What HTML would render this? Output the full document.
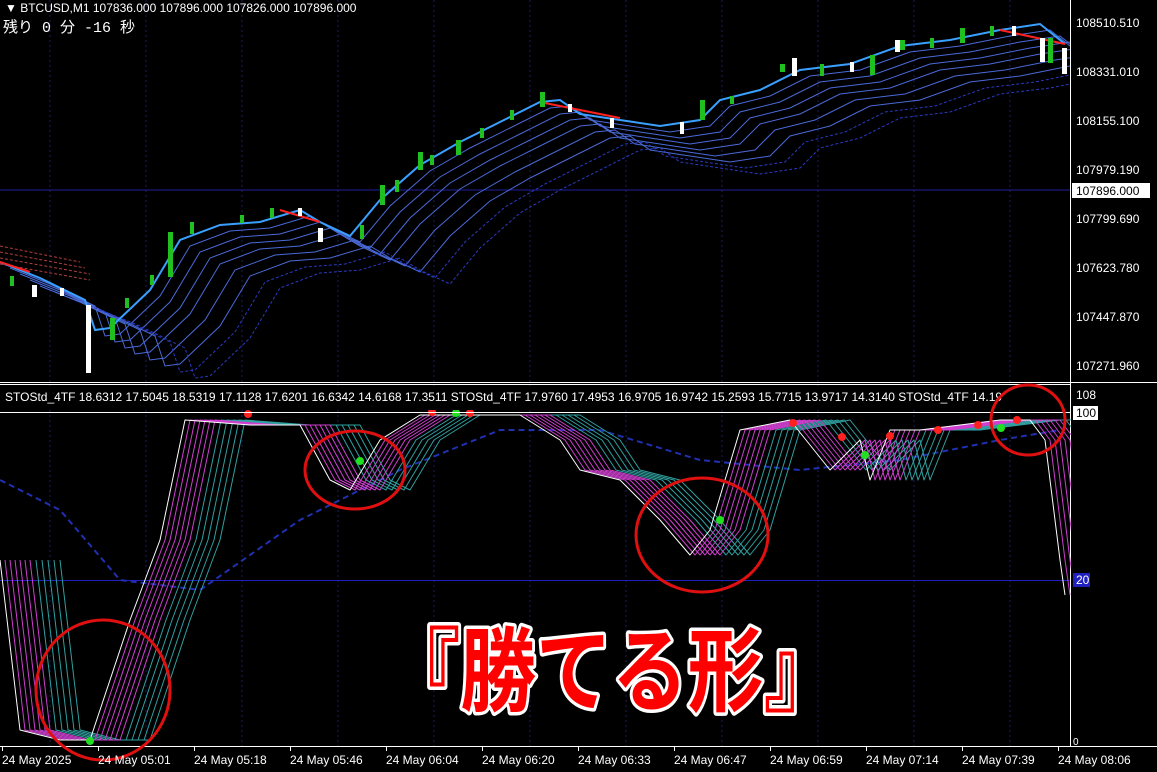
<!DOCTYPE html><html><head><meta charset="utf-8"><style>
html,body{margin:0;padding:0;background:#000;width:1157px;height:772px;overflow:hidden}
svg{display:block}
</style></head><body>
<svg width="1157" height="772" viewBox="0 0 1157 772" xmlns="http://www.w3.org/2000/svg" font-family="Liberation Sans, sans-serif">
<defs>
<path id="pr" fill="none" d="M0,262 L40,278 L85,300 L95,330 L110,328 L150,290 L180,240 L220,225 L260,222 L300,210 L320,222 L350,236 L380,200 L420,165 L460,142 L500,122 L540,102 L560,100 L580,114 L620,120 L660,126 L700,120 L720,100 L760,90 L800,70 L850,64 L900,46 L950,40 L1000,30 L1040,24 L1065,44"/>
<path id="st" fill="none" stroke-linejoin="round" d="M0,560 L20,730 L60,740 L90,740 L130,620 L160,540 L185,420 L250,425 L300,425 L330,480 L350,490 L380,440 L420,415 L520,415 L560,440 L580,470 L620,480 L660,520 L690,555 L710,530 L740,430 L790,420 L830,470 L860,440 L870,480 L890,430 L920,430 L1000,420 L1030,420 L1045,440 L1060,560 L1065,595"/>
</defs>
<g stroke="#1c1c60" stroke-dasharray="2,3">
<line x1="50" y1="0" x2="50" y2="746"/><line x1="146" y1="0" x2="146" y2="746"/><line x1="242" y1="0" x2="242" y2="746"/><line x1="338" y1="0" x2="338" y2="746"/><line x1="434" y1="0" x2="434" y2="746"/><line x1="530" y1="0" x2="530" y2="746"/><line x1="626" y1="0" x2="626" y2="746"/><line x1="722" y1="0" x2="722" y2="746"/><line x1="818" y1="0" x2="818" y2="746"/><line x1="914" y1="0" x2="914" y2="746"/><line x1="1010" y1="0" x2="1010" y2="746"/>
</g>
<line x1="0" y1="190" x2="1070" y2="190" stroke="#2020a0"/>
<g stroke="#4a6ad8" stroke-width="1">
<use href="#pr" transform="translate(10,6)"/><use href="#pr" transform="translate(20,12)"/><use href="#pr" transform="translate(30,18)"/><use href="#pr" transform="translate(40,24)"/><use href="#pr" transform="translate(55,30)"/><use href="#pr" transform="translate(70,36)"/>
</g>
<g stroke="#2a3ac0" stroke-dasharray="3,2"><use href="#pr" transform="translate(85,42)"/><use href="#pr" transform="translate(100,48)"/></g>
<g stroke="#b04040" stroke-dasharray="3,2"><line x1="0" y1="246" x2="80" y2="262"/><line x1="0" y1="252" x2="85" y2="268"/><line x1="0" y1="258" x2="90" y2="274"/><line x1="0" y1="264" x2="90" y2="280"/></g>
<use href="#pr" stroke="#3aa0ff" stroke-width="2"/>
<path d="M540,102 L620,118 M280,210 L320,222 M1000,30 L1065,44 M0,262 L30,272" stroke="#ff2020" stroke-width="2" fill="none"/>
<g fill="#20c020"><rect x="110" y="318" width="5" height="22"/><rect x="168" y="232" width="5" height="45"/><rect x="380" y="185" width="5" height="20"/><rect x="418" y="152" width="5" height="18"/><rect x="456" y="140" width="5" height="15"/><rect x="540" y="92" width="5" height="15"/><rect x="700" y="100" width="5" height="20"/><rect x="870" y="55" width="5" height="20"/><rect x="960" y="28" width="5" height="15"/><rect x="1048" y="38" width="5" height="25"/><rect x="780" y="64" width="5" height="8"/><rect x="900" y="40" width="5" height="10"/><rect x="125" y="298" width="4" height="10"/><rect x="150" y="275" width="4" height="10"/><rect x="190" y="222" width="4" height="12"/><rect x="240" y="215" width="4" height="8"/><rect x="270" y="208" width="4" height="10"/><rect x="360" y="225" width="4" height="14"/><rect x="395" y="180" width="4" height="12"/><rect x="430" y="155" width="4" height="10"/><rect x="480" y="128" width="4" height="10"/><rect x="510" y="110" width="4" height="10"/><rect x="730" y="96" width="4" height="8"/><rect x="820" y="64" width="4" height="12"/><rect x="930" y="38" width="4" height="10"/><rect x="990" y="26" width="4" height="10"/><rect x="10" y="276" width="4" height="10"/></g>
<g fill="#fff"><rect x="86" y="305" width="5" height="68"/><rect x="32" y="285" width="5" height="12"/><rect x="318" y="228" width="5" height="14"/><rect x="792" y="58" width="5" height="18"/><rect x="1062" y="48" width="5" height="26"/><rect x="1040" y="38" width="5" height="24"/><rect x="895" y="40" width="5" height="12"/><rect x="60" y="288" width="4" height="8"/><rect x="298" y="208" width="4" height="8"/><rect x="568" y="104" width="4" height="8"/><rect x="610" y="118" width="4" height="10"/><rect x="680" y="122" width="4" height="12"/><rect x="850" y="62" width="4" height="10"/><rect x="1012" y="26" width="4" height="10"/></g>
<rect x="1070" y="0" width="87" height="772" fill="#000"/>
<line x1="1070.5" y1="0" x2="1070.5" y2="746" stroke="#fff"/>
<line x1="0" y1="382.5" x2="1157" y2="382.5" stroke="#fff"/>
<line x1="0" y1="384.5" x2="1070" y2="384.5" stroke="#fff"/>
<line x1="0" y1="746.5" x2="1157" y2="746.5" stroke="#fff"/>
<g fill="#fff" font-size="12">
<text x="1076" y="27">108510.510</text><text x="1076" y="76">108331.010</text><text x="1076" y="125">108155.100</text><text x="1076" y="174">107979.190</text><text x="1076" y="223">107799.690</text><text x="1076" y="272">107623.780</text><text x="1076" y="321">107447.870</text><text x="1076" y="370">107271.960</text>
</g>
<rect x="1072" y="183" width="78" height="15" fill="#fff"/><text x="1076" y="195" font-size="12" fill="#000">107896.000</text>
<text x="5" y="12" font-size="12" fill="#fff">▼ BTCUSD,M1  107836.000 107896.000 107826.000 107896.000</text>
<text x="3" y="32" font-size="15" fill="#fff" font-family="Liberation Mono, Noto Sans CJK JP, monospace">残り 0 分 -16 秒</text>
<line x1="0" y1="412.5" x2="1070" y2="412.5" stroke="#fff"/>
<line x1="0" y1="580.5" x2="1070" y2="580.5" stroke="#2020c0"/>
<path d="M0,480 L60,510 L120,580 L200,590 L300,520 L400,470 L500,430 L600,430 L700,460 L800,470 L900,460 L1000,440 L1060,430" fill="none" stroke="#2030b0" stroke-width="2" stroke-dasharray="6,4"/>
<g stroke="#30a0a0"><use href="#st" transform="translate(60,0)"/><use href="#st" transform="translate(54,0)"/><use href="#st" transform="translate(48,0)"/><use href="#st" transform="translate(42,0)"/><use href="#st" transform="translate(36,0)"/></g>
<g stroke="#d040d0"><use href="#st" transform="translate(30,0)"/><use href="#st" transform="translate(25,0)"/><use href="#st" transform="translate(20,0)"/><use href="#st" transform="translate(15,0)"/><use href="#st" transform="translate(10,0)"/><use href="#st" transform="translate(5,0)"/></g>
<use href="#st" stroke="#fff"/>
<g fill="#20e020"><circle cx="90" cy="741" r="4"/><circle cx="360" cy="461" r="4"/><circle cx="456" cy="413" r="4"/><circle cx="720" cy="520" r="4"/><circle cx="865" cy="455" r="4"/><circle cx="1001" cy="428" r="4"/></g>
<g fill="#ff2020"><circle cx="248" cy="414" r="4"/><circle cx="432" cy="412" r="4"/><circle cx="470" cy="413" r="4"/><circle cx="793" cy="423" r="4"/><circle cx="842" cy="437" r="4"/><circle cx="890" cy="436" r="4"/><circle cx="938" cy="430" r="4"/><circle cx="978" cy="425" r="4"/><circle cx="1017" cy="420" r="4"/></g>
<rect x="0" y="386" width="1070" height="24" fill="#000"/>
<line x1="0" y1="412.5" x2="1070" y2="412.5" stroke="#fff"/>
<text x="5" y="401" font-size="12" fill="#fff">STOStd_4TF 18.6312 17.5045 18.5319 17.1128 17.6201 16.6342 14.6168 17.3511   STOStd_4TF 17.9760 17.4953 16.9705 16.9742 15.2593 15.7715 13.9717 14.3140   STOStd_4TF 14.19</text>
<g fill="none" stroke="#e01010" stroke-width="3">
<ellipse cx="103" cy="690" rx="67" ry="70"/><ellipse cx="355" cy="470" rx="50" ry="39"/><ellipse cx="702" cy="535" rx="66" ry="57"/><ellipse cx="1028" cy="420" rx="37" ry="35"/>
</g>
<rect x="1071" y="386" width="86" height="360" fill="#000"/>
<text x="1076" y="399" font-size="12" fill="#fff">108</text>
<rect x="1073" y="406" width="25" height="14" fill="#fff"/><text x="1076" y="417" font-size="12" fill="#000">100</text>
<rect x="1073" y="573" width="17" height="14" fill="#2020c0"/><text x="1076" y="584" font-size="12" fill="#fff">20</text>
<text x="1073" y="745" font-size="10" fill="#fff">0</text>
<g fill="#fff" font-size="12">
<text x="2" y="764">24 May 2025</text><text x="98" y="764">24 May 05:01</text><text x="194" y="764">24 May 05:18</text><text x="290" y="764">24 May 05:46</text><text x="386" y="764">24 May 06:04</text><text x="482" y="764">24 May 06:20</text><text x="578" y="764">24 May 06:33</text><text x="674" y="764">24 May 06:47</text><text x="770" y="764">24 May 06:59</text><text x="866" y="764">24 May 07:14</text><text x="962" y="764">24 May 07:39</text><text x="1058" y="764">24 May 08:06</text>
</g>
<g stroke="#fff"><line x1="2.5" y1="746" x2="2.5" y2="751"/><line x1="98.5" y1="746" x2="98.5" y2="751"/><line x1="194.5" y1="746" x2="194.5" y2="751"/><line x1="290.5" y1="746" x2="290.5" y2="751"/><line x1="386.5" y1="746" x2="386.5" y2="751"/><line x1="482.5" y1="746" x2="482.5" y2="751"/><line x1="578.5" y1="746" x2="578.5" y2="751"/><line x1="674.5" y1="746" x2="674.5" y2="751"/><line x1="770.5" y1="746" x2="770.5" y2="751"/><line x1="866.5" y1="746" x2="866.5" y2="751"/><line x1="962.5" y1="746" x2="962.5" y2="751"/><line x1="1058.5" y1="746" x2="1058.5" y2="751"/></g>
<text x="612" y="704" text-anchor="middle" font-size="92" font-weight="bold" fill="#ff0000" stroke="#fff" stroke-width="7" paint-order="stroke" stroke-linejoin="round" font-family="Liberation Sans, Noto Sans CJK JP, sans-serif" textLength="455" lengthAdjust="spacingAndGlyphs">『勝てる形』</text>
</svg>
</body></html>
